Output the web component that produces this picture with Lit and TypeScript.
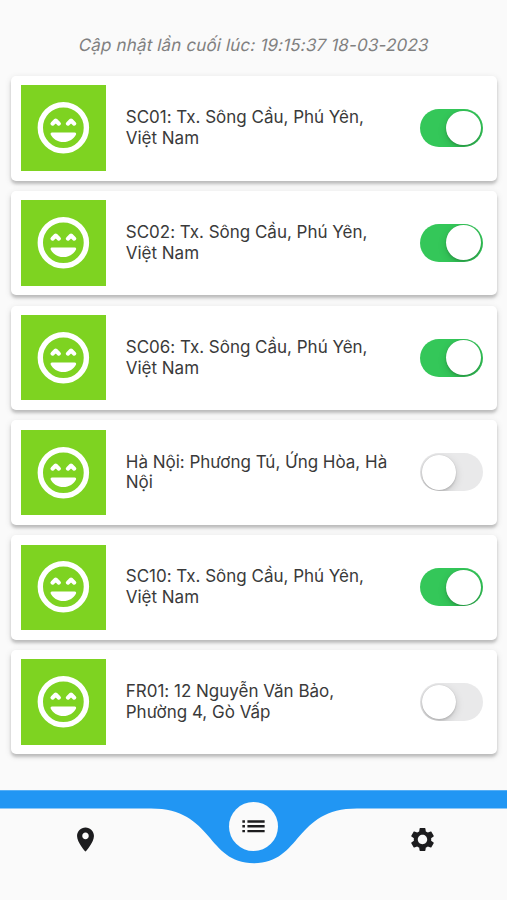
import { LitElement, html, css, svg } from "lit";
import { customElement, property } from "lit/decorators.js";
import { classMap } from "lit/directives/class-map.js";

interface Station {
  lines: string[];
  on: boolean;
}

const stations: Station[] = [
  { lines: ["SC01: Tx. Sông Cầu, Phú Yên,", "Việt Nam"], on: true },
  { lines: ["SC02: Tx. Sông Cầu, Phú Yên,", "Việt Nam"], on: true },
  { lines: ["SC06: Tx. Sông Cầu, Phú Yên,", "Việt Nam"], on: true },
  { lines: ["Hà Nội: Phương Tú, Ứng Hòa, Hà", "Nội"], on: false },
  { lines: ["SC10: Tx. Sông Cầu, Phú Yên,", "Việt Nam"], on: true },
  { lines: ["FR01: 12 Nguyễn Văn Bảo,", "Phường 4, Gò Vấp"], on: false },
];

const smile = svg`
  <circle cx="11.85" cy="12" r="9" fill="none" stroke="#fff" stroke-width="2.1"/>
  <path d="M7.6 10.4L8.85 9.2l1.25 1.2M13.6 10.4l1.25-1.2 1.25 1.2" fill="none" stroke="#fff" stroke-width="1.6" stroke-linecap="round" stroke-linejoin="round"/>
  <path d="M7.4 13.9h8.9c.4 0 .65.35.5.75-.8 1.75-2.75 2.95-4.95 2.95s-4.15-1.2-4.95-2.95c-.15-.4.1-.75.5-.75z" fill="#fff"/>`;

@customElement("station-card")
export class StationCard extends LitElement {
  @property({ attribute: false }) station!: Station;

  static styles = css`
    :host { display: block; }
    .card {
      box-sizing: border-box;
      height: 104.5px;
      padding: 0 14.5px 0.4px 9.7px;
      display: flex;
      align-items: center;
      background: #fff;
      border-radius: 5px;
      box-shadow: 0 3px 3px rgba(0, 0, 0, 0.18), 0 2px 7px rgba(0, 0, 0, 0.12);
    }
    .tile {
      width: 85.4px;
      height: 85.4px;
      flex: none;
      display: flex;
      align-items: center;
      justify-content: center;
      background: #7ed321;
    }
    .tile svg { width: 61.5px; height: 61.5px; }
    .name {
      flex: 1;
      margin-left: 19.7px;
      font-size: 17px;
      line-height: 20.8px;
      letter-spacing: -0.01px;
      color: #3a3a3a;
      white-space: nowrap;
    }
    .line { display: block; }
    .switch {
      box-sizing: border-box;
      width: 62.5px;
      height: 38px;
      flex: none;
      padding: 1.6px;
      display: flex;
      border-radius: 19px;
      background: #e9e9ea;
      overflow: hidden;
    }
    .knob {
      width: 34.8px;
      height: 34.8px;
      border-radius: 50%;
      background: #fff;
      box-shadow: 0 3px 8px rgba(0, 0, 0, 0.15), 0 2px 2px rgba(0, 0, 0, 0.1), 0 0 1px rgba(0, 0, 0, 0.2);
    }
    .switch.on { background: #34c759; justify-content: flex-end; }
  `;

  render() {
    const s = this.station;
    return html`<div class="card">
      <div class="tile"><svg viewBox="0 0 24 24">${smile}</svg></div>
      <div class="name">${s.lines.map((l) => html`<span class="line">${l}</span>`)}</div>
      <div class=${classMap({ switch: true, on: s.on })}><div class="knob"></div></div>
    </div>`;
  }
}

@customElement("app-root")
export class AppRoot extends LitElement {
  static styles = css`
    :host {
      display: flex;
      flex-direction: column;
      height: 900px;
      overflow: hidden;
      background: #fafafa;
      font-family: Inter, "Noto Sans", sans-serif;
    }
    .updated {
      flex: none;
      height: 76px;
      box-sizing: border-box;
      padding-top: 34px;
      text-align: center;
      font-size: 17px;
      line-height: 22px;
      letter-spacing: 0.16px;
      color: #808080;
      white-space: nowrap;
    }
    /* Slanted roman letterforms rather than the cursive italic cut. */
    .slanted { display: inline-block; transform: skewX(-12deg); }
    .list {
      flex: 1;
      display: flex;
      flex-direction: column;
      gap: 10.3px;
      padding: 0 10px 0 11px;
    }
    .nav {
      position: relative;
      flex: none;
      height: 110px;
    }
    .wave { display: block; width: 507px; height: 110px; }
    .items {
      position: absolute;
      inset: 0;
      display: grid;
      grid-template-columns: 1fr 1fr 1fr;
      justify-items: center;
      align-items: start;
      padding-left: 1px;
    }
    .item { margin-top: 34.5px; }
    .item svg { display: block; width: 29px; height: 29px; fill: #1c1c1e; }
    .active svg { display: block; width: 27px; height: 27px; fill: #1c1c1e; }
    .active {
      margin-top: 12.4px;
      width: 49px;
      height: 49px;
      border-radius: 50%;
      background: #fafafa;
      display: flex;
      align-items: center;
      justify-content: center;
    }
  `;

  render() {
    return html`
      <div class="updated"><span class="slanted">Cập nhật lần cuối lúc: 19:15:37 18-03-2023</span></div>
      <div class="list">
        ${stations.map((s) => html`<station-card .station=${s}></station-card>`)}
      </div>
      <div class="nav">
        <svg class="wave" viewBox="0 0 507 110">
          <path fill="#2196f3" d="M0 .3H507V18.6H357C294 18.6 302 73.2 254 73.2S214 18.6 151 18.6H0z"/>
        </svg>
        <div class="items">
          <div class="item">
            <svg viewBox="0 0 24 24"><path d="M12 2C8.13 2 5 5.13 5 9c0 5.25 7 13 7 13s7-7.75 7-13c0-3.87-3.13-7-7-7zm0 9.7c-1.49 0-2.7-1.21-2.7-2.7s1.21-2.7 2.7-2.7 2.7 1.21 2.7 2.7-1.21 2.7-2.7 2.7z"/></svg>
          </div>
          <div class="active">
            <svg viewBox="0 0 24 24"><path d="M2.1 6.4h2.3v2.2H2.1zm0 4.3h2.3v2.2H2.1zm0 4.3h2.3v2.2H2.1zM6.6 6.4h15.3v2.2H6.6zm0 4.3h15.3v2.2H6.6zm0 4.3h15.3v2.2H6.6z"/></svg>
          </div>
          <div class="item">
            <svg viewBox="0 0 24 24"><path d="M19.14 12.94c.04-.3.06-.61.06-.94 0-.32-.02-.64-.07-.94l2.03-1.58c.18-.14.23-.41.12-.61l-1.92-3.32c-.12-.22-.37-.29-.59-.22l-2.39.96c-.5-.38-1.03-.7-1.62-.94l-.36-2.54c-.04-.24-.24-.41-.48-.41h-3.84c-.24 0-.43.17-.47.41l-.36 2.54c-.59.24-1.13.57-1.62.94l-2.39-.96c-.22-.08-.47 0-.59.22L2.74 8.87c-.12.21-.08.47.12.61l2.03 1.58c-.05.3-.09.63-.09.94s.02.64.07.94l-2.03 1.58c-.18.14-.23.41-.12.61l1.92 3.32c.12.22.37.29.59.22l2.39-.96c.5.38 1.03.7 1.62.94l.36 2.54c.05.24.24.41.48.41h3.84c.24 0 .44-.17.47-.41l.36-2.54c.59-.24 1.13-.56 1.62-.94l2.39.96c.22.08.47 0 .59-.22l1.92-3.32c.12-.22.07-.47-.12-.61l-2.01-1.58zM12 15.9c-2.15 0-3.9-1.75-3.9-3.9s1.75-3.9 3.9-3.9 3.9 1.75 3.9 3.9-1.75 3.9-3.9 3.9z"/></svg>
          </div>
        </div>
      </div>
    `;
  }
}
